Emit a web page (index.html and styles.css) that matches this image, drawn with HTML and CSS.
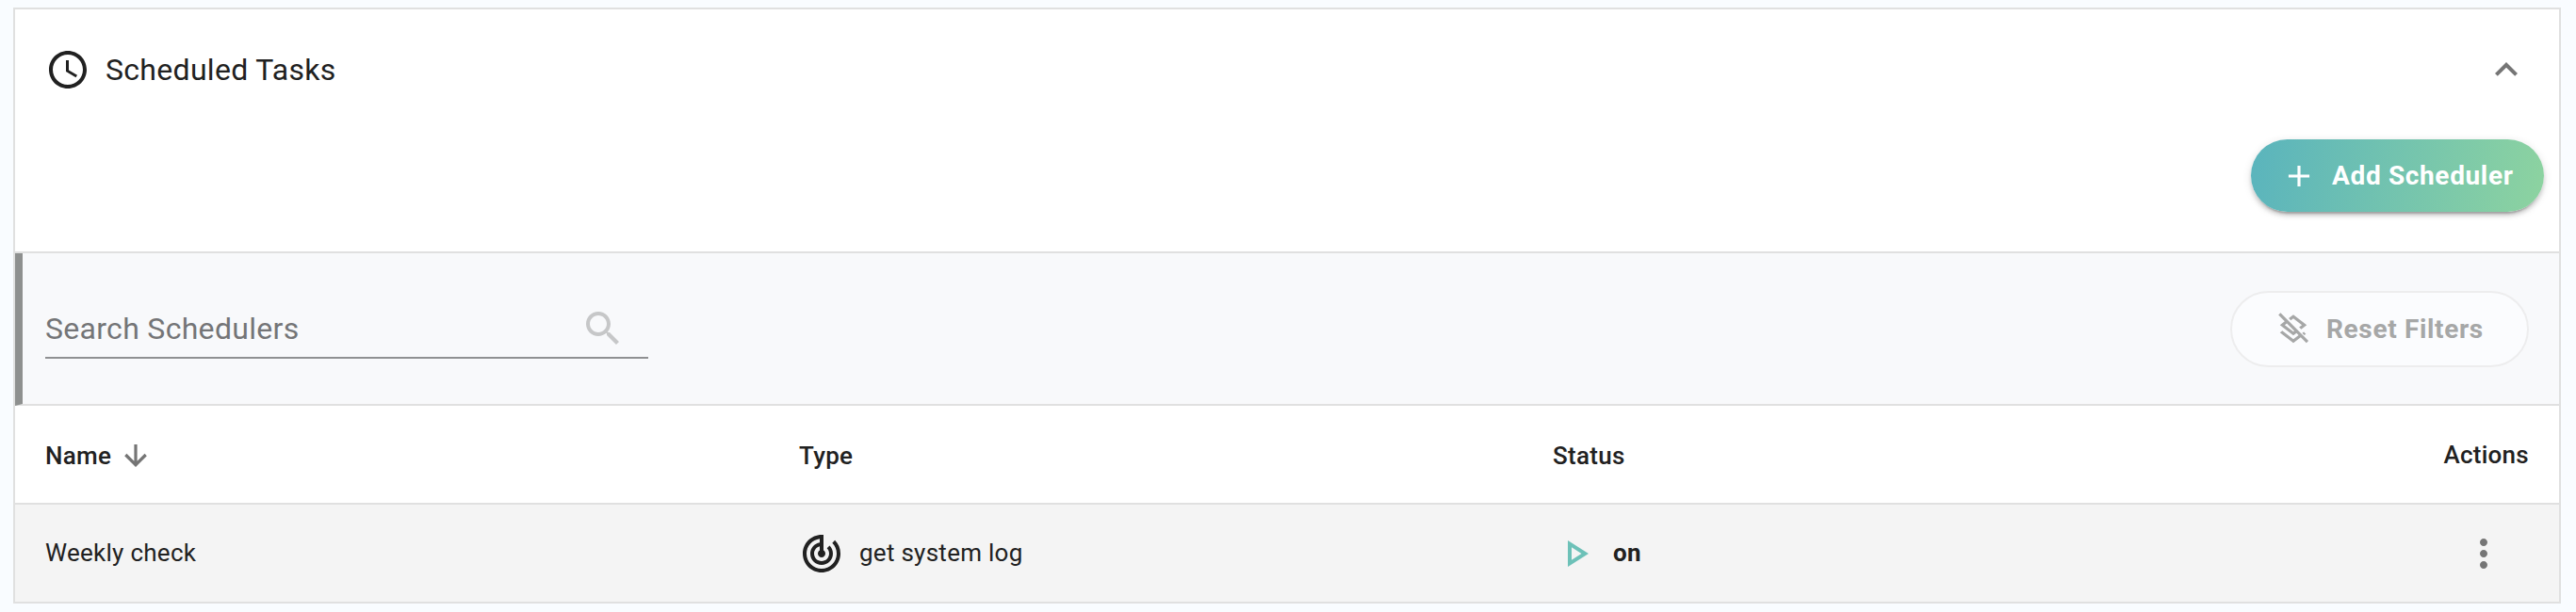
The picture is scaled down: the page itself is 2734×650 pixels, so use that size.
FILE: index.html
```html
<!DOCTYPE html>
<html lang="en">
<head>
<meta charset="utf-8">
<title>Scheduled Tasks</title>
<link rel="stylesheet" href="styles.css">
</head>
<body>
<main class="panel">
  <header class="panel-header">
    <svg class="icon" viewBox="0 0 24 24"><path d="M11.99 2C6.47 2 2 6.48 2 12s4.47 10 9.99 10C17.52 22 22 17.52 22 12S17.52 2 11.99 2zM12 20c-4.42 0-8-3.58-8-8s3.58-8 8-8 8 3.58 8 8-3.58 8-8 8zm.5-13H11v6l5.25 3.15.75-1.23-4.5-2.67z"/></svg>
    <h1 class="panel-title">Scheduled Tasks</h1>
    <svg class="icon icon-muted" viewBox="0 0 24 24"><path d="M12 8l-6 6 1.41 1.41L12 10.83l4.59 4.58L18 14z"/></svg>
  </header>
  <div class="toolbar">
    <button class="btn btn-add">
      <svg class="icon-small" viewBox="0 0 24 24"><path d="M19 13h-6v6h-2v-6H5v-2h6V5h2v6h6v2z"/></svg>
      <span class="add-label">Add Scheduler</span>
    </button>
  </div>
  <section class="filters">
    <div class="search">
      <span class="search-label">Search Schedulers</span>
      <svg class="icon icon-search" viewBox="0 0 24 24"><path d="M15.5 14h-.79l-.28-.27C15.41 12.59 16 11.11 16 9.5 16 5.91 13.09 3 9.5 3S3 5.91 3 9.5 5.91 16 9.5 16c1.61 0 3.09-.59 4.23-1.57l.27.28v.79l5 4.99L20.49 19l-4.99-5zm-6 0C7.01 14 5 11.99 5 9.5S7.01 5 9.5 5 14 7.01 14 9.5 11.99 14 9.5 14z"/></svg>
    </div>
    <button class="btn btn-reset">
      <svg class="icon-small" viewBox="0 0 24 24"><path d="M17.94 14.39l1.06-.82 1.43 1.43-1.07.82zM12 4.53L17.74 9l-1.86 1.45 1.42 1.42L21 9l-9-7-3.1 2.41 1.42 1.43zM3.41.86L2 2.27l4.22 4.22L3 9l9 7 2.1-1.63 1.42 1.42L12 18.54l-7.37-5.73L3 14.07l9 7 4.95-3.85 3.78 3.78 1.41-1.41zM12 13.47L6.26 9l1.39-1.08 5.02 5.02z"/></svg>
      <span class="reset-label">Reset Filters</span>
    </button>
  </section>
  <div class="row row-head">
    <div class="cell">Name
      <svg class="sort-arrow" viewBox="0 0 24 24"><path d="M12 0v21M1.3 11L12 21.7 22.7 11"/></svg>
    </div>
    <div class="cell">Type</div>
    <div class="cell">Status</div>
    <div class="cell cell-end head-actions">Actions</div>
  </div>
  <div class="row row-item">
    <div class="cell">Weekly check</div>
    <div class="cell">
      <svg class="icon" viewBox="0 0 24 24"><path d="M19.07 4.93l-1.41 1.41C19.1 7.79 20 9.79 20 12c0 4.42-3.58 8-8 8s-8-3.58-8-8c0-4.08 3.05-7.44 7-7.93v2.02C8.16 6.57 6 9.03 6 12c0 3.31 2.69 6 6 6s6-2.69 6-6c0-1.66-.67-3.16-1.76-4.24l-1.41 1.41C15.55 9.9 16 10.9 16 12c0 2.21-1.79 4-4 4s-4-1.79-4-4c0-1.86 1.28-3.41 3-3.86v2.14c-.6.35-1 .98-1 1.72 0 1.1.9 2 2 2s2-.9 2-2c0-.74-.4-1.38-1-1.72V2h-1C6.48 2 2 6.48 2 12s4.48 10 10 10 10-4.48 10-10c0-2.76-1.12-5.26-2.93-7.07z"/></svg>
      <span class="cell-text">get system log</span>
    </div>
    <div class="cell">
      <svg class="icon icon-on" viewBox="0 0 24 24"><path d="M10 8.64L15.27 12 10 15.36V8.64M8 5v14l11-7L8 5z"/></svg>
      <span class="cell-text status-text">on</span>
    </div>
    <div class="cell cell-end cell-menu">
      <svg class="icon icon-muted" viewBox="0 0 24 24"><path d="M12 8c1.1 0 2-.9 2-2s-.9-2-2-2-2 .9-2 2 .9 2 2 2zm0 2c-1.1 0-2 .9-2 2s.9 2 2 2 2-.9 2-2-.9-2-2-2zm0 6c-1.1 0-2 .9-2 2s.9 2 2 2 2-.9 2-2-.9-2-2-2z"/></svg>
    </div>
  </div>
</main>
</body>
</html>
```
FILE: styles.css
```css
* {
  box-sizing: border-box;
}

body {
  margin: 0;
  padding: 8px 16px 0 14px;
  background: #f9fcff;
  color: #212121;
  font-family: Roboto, sans-serif;
  font-size: 26px;
}

.panel {
  height: 633px;
  border: 2px solid #e0e0e0;
  background: #fff;
}

.icon {
  flex: none;
  width: 48px;
  height: 48px;
  fill: currentColor;
}

.icon-muted {
  color: #757575;
}

.icon-small {
  flex: none;
  width: 38px;
  height: 38px;
  fill: currentColor;
}

.panel-header {
  display: flex;
  align-items: center;
  height: 128px;
  padding: 0 32px;
}

.panel-title {
  flex: 1;
  margin: 0 0 0 16px;
  font-size: 32px;
  font-weight: 400;
  letter-spacing: 0.3px;
}

.toolbar {
  height: 131px;
  padding: 10px 16px 0;
  border-bottom: 2px solid #e0e0e0;
  display: flex;
  justify-content: flex-end;
  align-items: flex-start;
}

.btn {
  display: flex;
  align-items: center;
  padding: 0;
  border: 0;
  border-radius: 41px;
  font-family: inherit;
  font-size: 28px;
  font-weight: 700;
  white-space: nowrap;
}

.btn-add {
  width: 311px;
  height: 77px;
  padding-left: 32px;
  gap: 16px;
  color: #fff;
  background: linear-gradient(100deg, #5ab4bd, #8dd3a0);
  box-shadow: 0 6px 2px -4px rgba(0, 0, 0, 0.2), 0 4px 4px rgba(0, 0, 0, 0.14), 0 2px 10px rgba(0, 0, 0, 0.12);
}

.add-label,
.reset-label {
  letter-spacing: 0.65px;
}

.filters {
  display: flex;
  align-items: center;
  justify-content: space-between;
  height: 162px;
  padding: 0 32px 0 24px;
  border-left: 8px solid #8e908f;
  border-bottom: 2px solid #e0e0e0;
  background: #f8f9fb;
}

.search {
  display: flex;
  align-items: flex-start;
  justify-content: space-between;
  width: 640px;
  height: 56px;
  margin-top: 8px;
  padding-right: 24px;
  border-bottom: 2px solid #8f9092;
}

.search-label {
  color: #747577;
  font-size: 32px;
  line-height: 48px;
  letter-spacing: 0.3px;
}

.icon-search {
  color: #c6c7c8;
}

.btn-reset {
  width: 317px;
  height: 81px;
  margin-top: 1px;
  padding-left: 46px;
  gap: 16px;
  border: 2px solid #ededee;
  background: #fbfcfe;
  color: #a6a7a7;
}

.row {
  display: grid;
  grid-template-columns: 800px 800px 800px 1fr;
  padding: 0 32px;
  line-height: 30px;
  letter-spacing: 0.27px;
}

.row-head {
  height: 105px;
  padding-top: 3px;
  border-bottom: 2px solid #e0e0e0;
  font-weight: 500;
}

.row-item {
  height: 103px;
  padding-bottom: 1px;
  background: #f4f4f4;
}

.row-item .icon {
  margin-top: 2px;
}

.cell {
  display: flex;
  align-items: center;
}

.cell-end {
  justify-content: flex-end;
}

.head-actions {
  padding-bottom: 2px;
}

.cell-text {
  margin-left: 16px;
}

.cell-menu {
  padding-right: 24px;
}

.sort-arrow {
  width: 24px;
  height: 24px;
  margin-left: 14px;
  fill: none;
  stroke: #757575;
  stroke-width: 3.2;
}

.icon-on {
  color: #6dc1b8;
}

.status-text {
  font-weight: 700;
}
```
